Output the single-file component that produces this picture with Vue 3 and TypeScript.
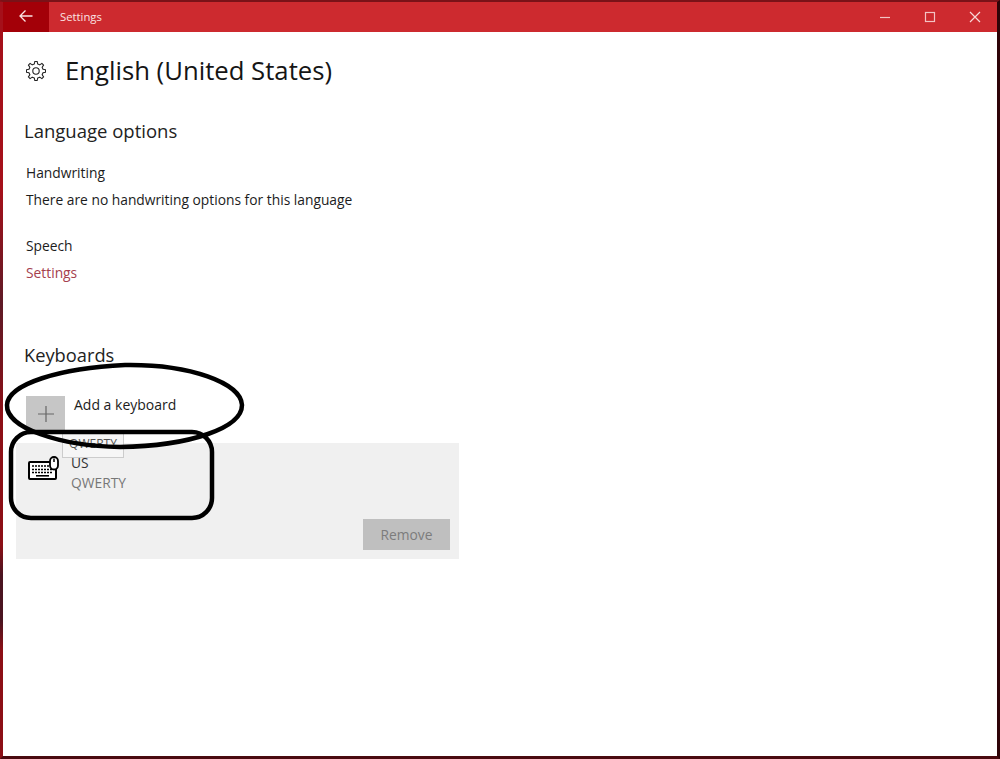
<template>
  <div class="window">
    <header class="titlebar">
      <button class="back" aria-label="Back">
        <svg width="14" height="14" viewBox="0 0 14 14" fill="none" stroke="#fbe3e3" stroke-width="1.3">
          <path d="M1 7H13.5M6.5 1.5L1 7l5.5 5.5" />
        </svg>
      </button>
      <span class="app-title">Settings</span>
      <div class="controls">
        <svg width="12" height="12" viewBox="0 0 12 12" fill="none" stroke="#f3c3c3" stroke-width="1.2">
          <path d="M1 6.5H11" />
        </svg>
        <svg width="12" height="12" viewBox="0 0 12 12" fill="none" stroke="#f3c3c3" stroke-width="1.2">
          <rect x="1.5" y="1.5" width="9" height="9" />
        </svg>
        <svg width="12" height="12" viewBox="0 0 12 12" fill="none" stroke="#f8d8d8" stroke-width="1.2">
          <path d="M1 1l10 10M11 1L1 11" />
        </svg>
      </div>
    </header>

    <main class="content">
      <div class="page-head">
        <svg class="gear" width="20" height="20" viewBox="0 0 20 20" fill="none" stroke="#222" stroke-width="1.1" stroke-linejoin="round">
          <path :d="gearPath" />
          <circle cx="10" cy="10" r="3.2" />
        </svg>
        <h1>English (United States)</h1>
      </div>

      <section class="options">
        <h2>Language options</h2>
        <p class="first">Handwriting</p>
        <p>There are no handwriting options for this language</p>
        <p class="group">Speech</p>
        <a class="link">Settings</a>
      </section>

      <section class="keyboards">
        <h2>Keyboards</h2>
        <div class="add-row">
          <span class="plus">
            <svg width="16" height="16" viewBox="0 0 16 16" stroke="#666" stroke-width="1.2">
              <path d="M8 0V16M0 8H16" />
            </svg>
          </span>
          <span class="add-label">Add a keyboard</span>
          <span class="tooltip">QWERTY</span>
        </div>
        <div class="kb-card">
          <div class="kb-info">
            <svg class="kb-icon" width="32" height="24" viewBox="0 0 32 24">
              <rect x="1" y="6" width="27" height="17" rx="1" fill="#fff" stroke="#000" stroke-width="2" />
              <path d="M4 10h18M4 13.500h21M4 16.500h21" stroke="#000" stroke-width="1.600" stroke-dasharray="2 1" />
              <path d="M8 19.800h13" stroke="#000" stroke-width="1.600" />
              <rect x="22" y="1" width="8" height="12.500" rx="4" fill="#fff" stroke="#000" stroke-width="1.800" />
              <path d="M26 2.500v3.500" stroke="#000" stroke-width="1.500" />
            </svg>
            <div class="kb-text">
              <span class="kb-name">US</span>
              <span class="kb-layout">QWERTY</span>
            </div>
          </div>
          <div class="kb-actions">
            <button class="remove" disabled>Remove</button>
          </div>
        </div>
      </section>
    </main>

    <!-- hand-drawn marks on top of the screenshot -->
    <svg class="marks" width="1000" height="759" viewBox="0 0 1000 759" fill="none" stroke="#000" stroke-width="4.500">
      <path d="M7 405C8 384 60 368 125 365C190 364 241 383 242 405C242 428 190 446 120 447C60 446 6 428 7 405Z" />
      <rect x="11" y="432" width="201" height="86" rx="20" />
    </svg>
  </div>
</template>

<script setup lang="ts">
// settings gear: 8 teeth round the centre of a 20x20 box
const teeth = 8
const points: string[] = []
for (let i = 0; i < teeth; i++) {
  const step = (Math.PI * 2) / teeth
  const a = i * step - Math.PI / 2
  const corners: [number, number][] = [
    [7.2, a - step * 0.3],
    [9.6, a - step * 0.16],
    [9.6, a + step * 0.16],
    [7.2, a + step * 0.3],
  ]
  for (const [r, t] of corners) {
    points.push(`${(10 + r * Math.cos(t)).toFixed(2)} ${(10 + r * Math.sin(t)).toFixed(2)}`)
  }
}
const gearPath = `M${points.join('L')}Z`
</script>

<style>
html,
body {
  margin: 0;
  background: #fff;
}
</style>

<style scoped>
.window {
  box-sizing: border-box;
  position: relative;
  width: 1000px;
  height: 759px;
  display: flex;
  flex-direction: column;
  background: #fff;
  border-left: 3px solid #8c0f16;
  border-right: 3px solid #2e0408;
  border-top: 2px solid #7a1218;
  border-bottom: 3px solid #4a0a10;
  font-family: "Open Sans", "Noto Sans", sans-serif;
  color: #1c1c1c;
}

/* the wallpaper showing through the left edge of the window */
.window::before {
  content: "";
  position: absolute;
  left: -3px;
  top: 0;
  bottom: 0;
  width: 3px;
  background: linear-gradient(
    to bottom,
    #a5101a 0,
    #a5101a 25%,
    #5e1a26 40%,
    #8c0f16 55%,
    #8c0f16 72%,
    #4a1420 76%,
    #4a1420 82%,
    #8c0f16 86%,
    #8c0f16 100%
  );
}

.titlebar {
  flex: none;
  height: 30px;
  display: flex;
  align-items: center;
  background: #cd2a2f;
  color: #fbe3e3;
}

.back {
  width: 46px;
  height: 30px;
  display: flex;
  align-items: center;
  justify-content: center;
  padding: 0 0 2px;
  border: none;
  background: #a30008;
}

.app-title {
  margin-left: 11px;
  margin-bottom: 2px;
  font-size: 11.300px;
}

.controls {
  margin-left: auto;
  display: flex;
  gap: 33px;
  padding-right: 16px;
}

.content {
  flex: 1;
  padding: 0 0 0 13px;
}

.page-head {
  display: flex;
  align-items: center;
  gap: 19px;
  height: 78px;
  padding-left: 10px;
}

h1 {
  margin: 0 0 1px;
  font-size: 25.700px;
  font-weight: 400;
  line-height: 34px;
  color: #151515;
}

h2 {
  margin: 0;
  font-size: 18.300px;
  font-weight: 400;
  line-height: 24px;
  color: #222;
}

.options {
  margin-top: 9px;
  padding-left: 8px;
}

.options h2 {
  font-size: 18.500px;
}

.options p,
.link {
  display: block;
  margin: 0;
  padding-left: 2px;
  font-size: 13.800px;
  line-height: 20px;
}

.options p {
  margin-top: 7px;
}

.options p.first {
  margin-top: 20px;
}

.options p.group {
  margin-top: 26px;
}

.link {
  margin-top: 7px;
  color: #a5404d;
}

.keyboards {
  margin-top: 60px;
}

.keyboards h2 {
  padding-left: 8px;
}

.add-row {
  position: relative;
  display: flex;
  align-items: flex-start;
  gap: 9px;
  margin: 29px 0 0 10px;
  height: 47px;
}

.plus {
  box-sizing: border-box;
  width: 39px;
  height: 38px;
  display: flex;
  align-items: center;
  justify-content: center;
  padding-bottom: 2px;
  background: #c6c6c6;
}

.add-label {
  margin-top: -1px;
  font-size: 14px;
  line-height: 20px;
}

.tooltip {
  position: absolute;
  z-index: 1;
  left: 36px;
  top: 36px;
  box-sizing: border-box;
  width: 62px;
  height: 26px;
  padding-top: 3px;
  background: #f6f6f6;
  border: 1px solid #ccc;
  font-size: 12px;
  line-height: 16px;
  text-align: center;
  color: #555;
}

.kb-card {
  width: 443px;
  height: 116px;
  box-sizing: border-box;
  padding: 10px 9px 9px 12px;
  display: flex;
  flex-direction: column;
  justify-content: space-between;
  background: #f0f0f0;
}

.kb-info {
  display: flex;
  gap: 11px;
}

.kb-icon {
  margin-top: 3px;
}

.kb-text {
  display: flex;
  flex-direction: column;
}

.kb-name {
  font-size: 13.800px;
  line-height: 20px;
  color: #333;
}

.kb-layout {
  font-size: 13.800px;
  line-height: 19px;
  color: #777;
}

.kb-actions {
  display: flex;
  justify-content: flex-end;
}

.remove {
  width: 87px;
  height: 31px;
  padding: 0;
  border: none;
  background: #bfbfbf;
  font-family: inherit;
  font-size: 13.800px;
  color: #7c7c7c;
}

.marks {
  position: absolute;
  z-index: 2;
  left: -3px;
  top: -2px;
  pointer-events: none;
}
</style>
